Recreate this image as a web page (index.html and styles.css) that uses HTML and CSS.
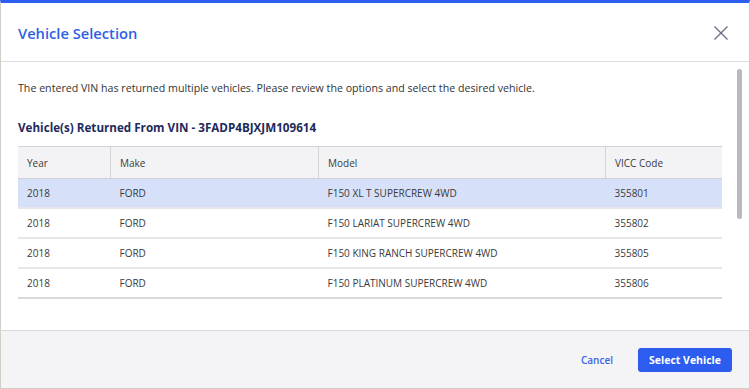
FILE: index.html
```html
<!DOCTYPE html>
<html>
  <head>
    <meta charset='utf-8'>
    <meta name="viewport" content="width=device-width,initial-scale=1.0">
    <title>Vehicle Selection</title>
    <link rel="stylesheet" href="styles.css">
  </head>
  <body>
    <div class='modal'>
      <header class='modal-header'>
        <h1>Vehicle Selection</h1>
        <button class='close' aria-label='Close'>
          <svg width="16" height="16" viewBox="0 0 16 16">
            <path d="M1.5 1.5 L14.5 14.5 M14.5 1.5 L1.5 14.5" stroke="#6b7082" stroke-width="1.4" fill="none"/>
          </svg>
        </button>
      </header>
      <section class='modal-body'>
        <p class='intro'>
          The entered VIN has returned multiple vehicles. Please review the options and select the desired vehicle.
        </p>
        <h2>Vehicle(s) Returned From VIN - 3FADP4BJXJM109614</h2>
        <table class='vehicles'>
          <thead>
            <tr>
              <th class='col-year'>Year</th>
              <th class='col-make'>Make</th>
              <th class='col-model'>Model</th>
              <th class='col-code'>VICC Code</th>
            </tr>
          </thead>
          <tbody>
            <tr class='selected'>
              <td>2018</td><td>FORD</td><td>F150 XL T SUPERCREW 4WD</td><td>355801</td>
            </tr>
            <tr>
              <td>2018</td><td>FORD</td><td>F150 LARIAT SUPERCREW 4WD</td><td>355802</td>
            </tr>
            <tr>
              <td>2018</td><td>FORD</td><td>F150 KING RANCH SUPERCREW 4WD</td><td>355805</td>
            </tr>
            <tr>
              <td>2018</td><td>FORD</td><td>F150 PLATINUM SUPERCREW 4WD</td><td>355806</td>
            </tr>
          </tbody>
        </table>
        <div class='scrollbar'></div>
      </section>
      <footer class='modal-footer'>
        <button class='btn-link'>Cancel</button>
        <button class='btn-primary'>Select Vehicle</button>
      </footer>
    </div>
  </body>
</html>
```

FILE: styles.css
```css
html, body, h1, h2, p {
    margin: 0;
    padding: 0;
}
body {
    background-color: #fff;
    font-family: "Open Sans", "Noto Sans", Arial, sans-serif;
    color: #333;
}
.modal {
    box-sizing: border-box;
    width: 750px;
    height: 389px;
    display: flex;
    flex-direction: column;
    border: 1px solid #cfcfc8;
    border-top: 3px solid #2c5cf0;
    background: #fff;
}
.modal-header {
    height: 59px;
    box-sizing: border-box;
    display: flex;
    align-items: center;
    justify-content: space-between;
    padding: 1px 20px 0 17px;
    border-bottom: 1px solid #dcdce3;
}
.modal-header h1 {
    font-size: 14.7px;
    font-weight: 600;
    color: #2f5fe6;
}
.close {
    background: none;
    border: 0;
    padding: 0;
    width: 16px;
    height: 16px;
    cursor: pointer;
}
.close svg {
    display: block;
}
.modal-body {
    flex: 1;
    position: relative;
    padding: 18px 26px 0 17px;
}
.intro {
    font-size: 10.65px;
    line-height: 16px;
    color: #333;
}
h2 {
    margin-top: 24px;
    font-size: 11.65px;
    line-height: 16px;
    font-weight: 700;
    color: #1d2a5c;
}
.vehicles {
    margin-top: 10px;
    width: 704px;
    border-collapse: collapse;
    font-size: 10px;
    color: #3a3a3a;
}
.vehicles th {
    text-align: left;
    font-weight: 400;
    height: 31px;
    padding: 0 9px;
    background-color: #f3f3f5;
    border-top: 1px solid #d3d3da;
    border-bottom: 1px solid #cfcfd6;
    border-left: 1px solid #d3d3da;
}
.vehicles th:first-child {
    border-left: 0;
}
.col-year { width: 74px; }
.col-make { width: 189px; }
.col-model { width: 268px; }
.vehicles td {
    height: 28px;
    padding: 0 9px;
    border-bottom: 2px solid #e6e6ea;
}
.vehicles tbody tr:last-child td {
    border-bottom-color: #d9d9dd;
}
.vehicles .selected td {
    background-color: #d6e1f9;
}
.scrollbar {
    position: absolute;
    top: 7px;
    right: 7px;
    width: 5px;
    height: 150px;
    border-radius: 3px;
    background-color: #b9b9bd;
}
.modal-footer {
    height: 58px;
    box-sizing: border-box;
    display: flex;
    align-items: center;
    justify-content: flex-end;
    padding: 0 17px 0 0;
    background-color: #f4f4f7;
    border-top: 1px solid #d8d8de;
}
.btn-link {
    background: none;
    border: 0;
    font-family: inherit;
    font-size: 10px;
    font-weight: 600;
    color: #3b63e6;
    margin-right: 25px;
    padding: 0;
}
.btn-primary {
    width: 94px;
    height: 24px;
    border: 0;
    border-radius: 3px;
    background-color: #2c5cf0;
    color: #fff;
    font-family: inherit;
    font-size: 10.5px;
    font-weight: 700;
    padding: 0;
}
```
